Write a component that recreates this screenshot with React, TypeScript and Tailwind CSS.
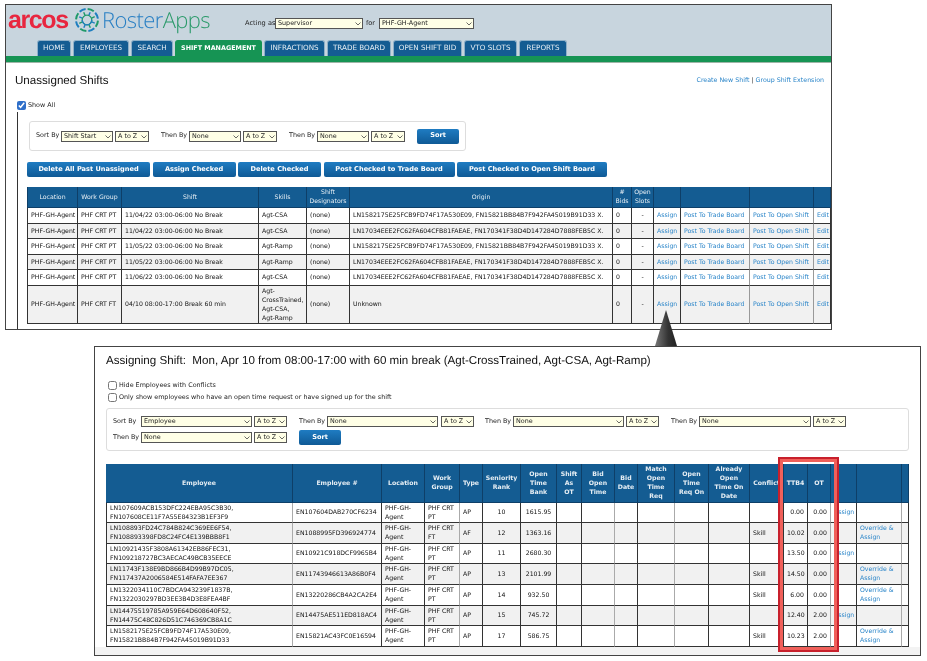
const verdana = "font-['DejaVu_Sans',sans-serif]";

const TABS = [
  { label: "HOME", w: "w-[34px]" },
  { label: "EMPLOYEES", w: "w-[56px]" },
  { label: "SEARCH", w: "w-[42px]" },
  { label: "SHIFT MANAGEMENT", w: "w-[87px]", active: true },
  { label: "INFRACTIONS", w: "w-[61px]" },
  { label: "TRADE BOARD", w: "w-[64px]" },
  { label: "OPEN SHIFT BID", w: "w-[69px]" },
  { label: "VTO SLOTS", w: "w-[53px]" },
  { label: "REPORTS", w: "w-[48px]" },
];

const ACTIONS = [
  { label: "Delete All Past Unassigned", w: "w-[123px]" },
  { label: "Assign Checked", w: "w-[83px]" },
  { label: "Delete Checked", w: "w-[83px]" },
  { label: "Post Checked to Trade Board", w: "w-[131px]" },
  { label: "Post Checked to Open Shift Board", w: "w-[150px]" },
];

const LN_A = "LN1582175E25FCB9FD74F17A530E09, FN15821BB84B7F942FA45019B91D33 X.";
const LN_B = "LN17034EEE2FC62FA604CFB81FAEAE, FN170341F38D4D147284D7888FEB5C X.";

const SHIFTS = [
  { group: "PHF CRT PT", shift: "11/04/22 03:00-06:00 No Break", skills: ["Agt-CSA"], origin: LN_A, h: "h-[16px]" },
  { group: "PHF CRT PT", shift: "11/04/22 03:00-06:00 No Break", skills: ["Agt-CSA"], origin: LN_B, h: "h-[15px]" },
  { group: "PHF CRT PT", shift: "11/05/22 03:00-06:00 No Break", skills: ["Agt-Ramp"], origin: LN_A, h: "h-[16px]" },
  { group: "PHF CRT PT", shift: "11/05/22 03:00-06:00 No Break", skills: ["Agt-Ramp"], origin: LN_B, h: "h-[15px]" },
  { group: "PHF CRT PT", shift: "11/06/22 03:00-06:00 No Break", skills: ["Agt-CSA"], origin: LN_B, h: "h-[16px]" },
  { group: "PHF CRT FT", shift: "04/10 08:00-17:00 Break 60 min", skills: ["Agt-", "CrossTrained,", "Agt-CSA,", "Agt-Ramp"], origin: "Unknown", h: "h-[38px]" },
];

const EMPLOYEES = [
  { a: "LN107609ACB153DFC224EBA95C3B30,", b: "FN107608CE11F7A55E84323B1EF3F9", no: "EN107604DAB270CF6234", group: "PT", type: "AP", rank: "10", bank: "1615.95", conflict: "", ttb: "0.00", ot: "0.00", h: "h-[20px]" },
  { a: "LN108893FD24C784B824C369EE6F54,", b: "FN108893398FD8C24FC4E139BBB8F1", no: "EN1088995FD396924774", group: "FT", type: "AF", rank: "12", bank: "1363.16", conflict: "Skill", ttb: "10.02", ot: "0.00", h: "h-[21px]" },
  { a: "LN10921435F3808A61342EB86FEC31,", b: "FN109218727BC3AECAC49BCB35EECE", no: "EN10921C918DCF9965B4", group: "PT", type: "AP", rank: "11", bank: "2680.30", conflict: "", ttb: "13.50", ot: "0.00", h: "h-[20px]" },
  { a: "LN11743F138E9BD866B4D99B97DC05,", b: "FN117437A2006584E514FAFA7EE367", no: "EN11743946613A86B0F4", group: "PT", type: "AP", rank: "13", bank: "2101.99", conflict: "Skill", ttb: "14.50", ot: "0.00", h: "h-[21px]" },
  { a: "LN1322034110C7BDCA943239F1837B,", b: "FN1322030297BD3EE3B4D3E8FEA4BF", no: "EN13220286CB4A2CA2E4", group: "PT", type: "AP", rank: "14", bank: "932.50", conflict: "Skill", ttb: "6.00", ot: "0.00", h: "h-[21px]" },
  { a: "LN14475519785A959E64D608640F52,", b: "FN14475C48C826D51C746369CB8A1C", no: "EN14475AE511ED818AC4", group: "PT", type: "AP", rank: "15", bank: "745.72", conflict: "", ttb: "12.40", ot: "2.00", h: "h-[20px]" },
  { a: "LN1582175E25FCB9FD74F17A530E09,", b: "FN15821BB84B7F942FA45019B91D33", no: "EN15821AC43FC0E16594", group: "PT", type: "AP", rank: "17", bank: "586.75", conflict: "Skill", ttb: "10.23", ot: "2.00", h: "h-[21px]" },
];

const SHIFT_COLS = ["w-[51px]", "w-[44px]", "w-[137px]", "w-[48px]", "w-[43px]", "w-[263px]", "w-[19px]", "w-[22px]", "w-[27px]", "w-[69px]", "w-[64px]", "w-[17px]"];

const EMP_HEAD = [
  { w: "w-[187px]", lines: ["Employee"] },
  { w: "w-[89px]", lines: ["Employee #"] },
  { w: "w-[43px]", lines: ["Location"] },
  { w: "w-[35px]", lines: ["Work", "Group"] },
  { w: "w-[23px]", lines: ["Type"] },
  { w: "w-[38px]", lines: ["Seniority", "Rank"] },
  { w: "w-[36px]", lines: ["Open", "Time", "Bank"] },
  { w: "w-[25px]", lines: ["Shift", "As", "OT"] },
  { w: "w-[33px]", lines: ["Bid", "Open", "Time"] },
  { w: "w-[23px]", lines: ["Bid", "Date"] },
  { w: "w-[37px]", lines: ["Match", "Open", "Time", "Req"] },
  { w: "w-[34px]", lines: ["Open", "Time", "Req On"] },
  { w: "w-[41px]", lines: ["Already", "Open", "Time On", "Date"] },
  { w: "w-[34px]", lines: ["Conflict"] },
  { w: "w-[24px]", lines: ["TTB4"] },
  { w: "w-[23px]", lines: ["OT"] },
  { w: "w-[26px]", lines: [] },
  { w: "w-[45px]", lines: [] },
  { w: "w-[7px]", lines: [] },
];

function Select({ value, w }: { value: string; w: string }) {
  return (
    <span className={`${w} relative block h-[11px] shrink-0`}>
      <select
        defaultValue={value}
        className={`block h-full w-full appearance-none rounded-none border border-[#555] bg-[#ffffe6] pl-[2px] text-[6.4px] leading-[9px] text-[#222] ${verdana}`}
      >
        <option>{value}</option>
      </select>
      <svg width="6" height="4" viewBox="0 0 6 4" className="pointer-events-none absolute top-[4px] right-[2px]">
        <path d="M0.5 0.5 L3 3 L5.5 0.5" fill="none" stroke="#444" strokeWidth="0.8" />
      </svg>
    </span>
  );
}

function Sort({ w }: { w: string }) {
  return (
    <button className={`${w} h-[15px] shrink-0 rounded-[2px] bg-gradient-to-b from-[#1f7cc2] to-[#0f5a96] text-[6.6px] font-bold text-white ${verdana}`}>
      Sort
    </button>
  );
}

function Logo() {
  const petals = [0, 45, 90, 135, 180, 225, 270, 315];
  return (
    <svg width="26" height="26" viewBox="0 0 26 26" className="shrink-0">
      {petals.map((a, i) => (
        <g key={a} transform={`rotate(${a + 22} 13 13)`}>
          <path d="M9.5 2.6 A11 11 0 0 1 16 2.4" fill="none" strokeWidth="2" stroke={i % 2 ? "#1f7fc0" : "#1f9a6a"} />
          <path d="M13 4.6 V8" fill="none" strokeWidth="1.4" stroke={i % 2 ? "#1f9a6a" : "#1f7fc0"} />
        </g>
      ))}
      <circle cx="13" cy="13" r="4.8" fill="none" stroke="#1f9a6a" strokeWidth="1.3" />
      <path d="M8.2 13 A4.8 4.8 0 0 0 17.8 13" fill="none" stroke="#1f7fc0" strokeWidth="1.3" />
    </svg>
  );
}

function Header() {
  return (
    <div className="flex h-[51px] flex-col bg-[#c8d5de]">
      <div className="flex h-[35px] items-start pl-[2px]">
        <div className="flex h-[30px] items-center">
          <span className="w-[66px] font-['Liberation_Sans',sans-serif] text-[25px] font-bold leading-none tracking-[-1.4px] text-[#e8263f]">arcos</span>
          <Logo />
          <span className="ml-[2px] w-[143px] font-['Open_Sans',sans-serif] text-[22px] font-light leading-none tracking-[-0.6px] text-[#2a80c4]">
            Roster<span className="text-[#2a9a6a]">Apps</span>
          </span>
        </div>
        <div className={`mt-[13px] flex items-center whitespace-nowrap text-[6.6px] text-[#222] ${verdana}`}>
          <span className="w-[30px]">Acting as</span>
          <Select value="Supervisor" w="w-[88px]" />
          <span className="w-[16px] pl-[3px]">for</span>
          <Select value="PHF-GH-Agent" w="w-[95px]" />
        </div>
      </div>
      <div className="mt-auto flex gap-[2px] pl-[31px]">
        {TABS.map((t) => (
          <div
            key={t.label}
            className={`${t.w} flex h-[16px] items-center justify-center whitespace-nowrap rounded-t-[3px] border border-b-0 ${verdana} ${
              t.active ? "border-[#169454] bg-[#169454] text-[6.4px] font-bold text-white" : "border-[#8fb0c8] bg-[#145c92] text-[7.2px] text-[#e6eef4]"
            }`}
          >
            {t.label}
          </div>
        ))}
      </div>
    </div>
  );
}

function ShiftsTable() {
  const td = "border-r border-b border-[#333] px-[3px]";
  const link = "text-[#2a85c9]";
  return (
    <table className={`w-[804px] table-fixed border-separate border-spacing-0 text-[6.2px] leading-[9px] text-[#111] ${verdana}`}>
      <colgroup>
        {SHIFT_COLS.map((w, i) => (
          <col key={i} className={w} />
        ))}
      </colgroup>
      <thead>
        <tr className="h-[21px] bg-[#145c92] text-center font-normal text-[#e6eef4]">
          {["Location", "Work Group", "Shift", "Skills", "Shift Designators", "Origin", "# Bids", "Open Slots", "", "", "", ""].map((h, i) => (
            <th key={i} className="overflow-hidden border-r border-b border-[#0e3f68] px-[1px] font-normal whitespace-normal first:border-l">
              {h}
            </th>
          ))}
        </tr>
      </thead>
      <tbody>
        {SHIFTS.map((s, i) => (
          <tr key={i} className={`${s.h} ${i % 2 ? "bg-[#f1f1f1]" : "bg-white"}`}>
            <td className={`${td} border-l whitespace-nowrap`}>PHF-GH-Agent</td>
            <td className={`${td} whitespace-nowrap`}>{s.group}</td>
            <td className={`${td} whitespace-nowrap`}>{s.shift}</td>
            <td className={td}>
              {s.skills.map((k) => (
                <div key={k}>{k}</div>
              ))}
            </td>
            <td className={td}>(none)</td>
            <td className={`${td} whitespace-nowrap`}>{s.origin}</td>
            <td className={td}>0</td>
            <td className={`${td} text-center`}>-</td>
            <td className={`${td} ${link} whitespace-nowrap`}>Assign</td>
            <td className={`${td} ${link} border-r-[#999] whitespace-nowrap`}>Post To Trade Board</td>
            <td className={`${td} ${link} border-r-[#999] whitespace-nowrap`}>Post To Open Shift</td>
            <td className={`${td} ${link} !pr-0 whitespace-nowrap`}>Edit</td>
          </tr>
        ))}
      </tbody>
    </table>
  );
}

function EmployeesTable() {
  const td = "border-r border-b border-[#333] px-[3px]";
  const gray = "border-r-[#aaa]";
  const link = "text-[#2a85c9]";
  return (
    <table className={`w-[803px] table-fixed border-separate border-spacing-0 text-[6.2px] leading-[9px] text-[#111] ${verdana}`}>
      <colgroup>
        {EMP_HEAD.map((c, i) => (
          <col key={i} className={c.w} />
        ))}
      </colgroup>
      <thead>
        <tr className="h-[39px] bg-[#145c92] text-center">
          {EMP_HEAD.map((c, i) => (
            <th key={i} className="overflow-hidden border-r border-b border-[#0e3f68] px-[1px] font-bold whitespace-nowrap text-[#e6eef4]">
              {c.lines.map((l) => (
                <div key={l}>{l}</div>
              ))}
            </th>
          ))}
        </tr>
      </thead>
      <tbody>
        {EMPLOYEES.map((e, i) => (
          <tr key={e.no} className={`${e.h} ${i % 2 ? "bg-[#f1f1f1]" : "bg-white"}`}>
            <td className={`${td} ${gray} border-l whitespace-nowrap`}>
              <div>{e.a}</div>
              <div>{e.b}</div>
            </td>
            <td className={`${td} whitespace-nowrap`}>{e.no}</td>
            <td className={td}>PHF-GH-Agent</td>
            <td className={`${td} ${gray}`}>PHF CRT {e.group}</td>
            <td className={td}>{e.type}</td>
            <td className={`${td} text-center`}>{e.rank}</td>
            <td className={`${td} text-center`}>{e.bank}</td>
            <td className={td} />
            <td className={`${td} ${gray}`} />
            <td className={td} />
            <td className={`${td} ${gray}`} />
            <td className={td} />
            <td className={td} />
            <td className={td}>{e.conflict}</td>
            <td className={`${td} text-right`}>{e.ttb}</td>
            <td className={`${td} text-right ${gray}`}>{e.ot}</td>
            <td className={`${td} ${link}`}>{e.conflict ? "" : "Assign"}</td>
            <td className={`${td} ${link} ${gray}`}>{e.conflict ? "Override & Assign" : ""}</td>
            <td className={td} />
          </tr>
        ))}
      </tbody>
    </table>
  );
}

function Check({ checked, label }: { checked?: boolean; label: string }) {
  return (
    <label className={`flex items-center gap-[2px] text-[6.4px] leading-[9px] text-[#222] ${verdana}`}>
      <input type="checkbox" defaultChecked={checked} className="m-0 h-[9px] w-[9px] accent-[#2f6fc9]" />
      {label}
    </label>
  );
}

function UnassignedShifts() {
  return (
    <div className="ml-[5px] h-[326px] w-[827px] overflow-hidden border border-[#444] bg-white">
      <Header />
      <div className="h-[7px] border-b border-[#9fb5a8] bg-[#169454]" />
      <div className="mt-[11px] flex h-[14px] items-center justify-between pr-[7px] pl-[9px]">
        <h1 className="font-['Liberation_Sans',sans-serif] text-[11.6px] text-[#111]">Unassigned Shifts</h1>
        <div className={`text-[6.3px] text-[#2a85c9] ${verdana}`}>
          Create New Shift <span className="text-[#333]">|</span> Group Shift Extension
        </div>
      </div>
      <div className="mt-[13px] pl-[11px]">
        <Check checked label="Show All" />
      </div>
      <div className="ml-[11px] mt-[2px] h-[220px] border-l border-[#333] pt-[9px] pl-[9px]">
        <div className={`ml-[2px] flex h-[30px] w-[437px] items-center rounded-[3px] border border-[#ddd] pl-[6px] text-[6.4px] text-[#222] ${verdana}`}>
          <span className="w-[25px]">Sort By</span>
          <Select value="Shift Start" w="w-[52px]" />
          <span className="w-[2px]" />
          <Select value="A to Z" w="w-[34px]" />
          <span className="w-[40px] pl-[12px]">Then By</span>
          <Select value="None" w="w-[52px]" />
          <span className="w-[2px]" />
          <Select value="A to Z" w="w-[34px]" />
          <span className="w-[40px] pl-[12px]">Then By</span>
          <Select value="None" w="w-[52px]" />
          <span className="w-[2px]" />
          <Select value="A to Z" w="w-[34px]" />
          <span className="w-[12px]" />
          <Sort w="w-[42px]" />
        </div>
        <div className="mt-[11px] flex gap-[2.5px]">
          {ACTIONS.map((a) => (
            <button
              key={a.label}
              className={`${a.w} h-[15px] shrink-0 rounded-[2px] bg-gradient-to-b from-[#1f7cc2] to-[#0f5a96] text-[6.6px] font-bold whitespace-nowrap text-white ${verdana}`}
            >
              {a.label}
            </button>
          ))}
        </div>
        <div className="mt-[10px]">
          <ShiftsTable />
        </div>
      </div>
    </div>
  );
}

function AssigningShift() {
  return (
    <div className="ml-[94px] mt-[16px] flex h-[310px] w-[827px] flex-col overflow-hidden border border-[#444] bg-white">
      <h2 className="mt-[7px] pl-[11px] font-['Liberation_Sans',sans-serif] text-[11.6px] leading-[14px] text-[#111]">
        Assigning Shift:&nbsp; Mon, Apr 10 from 08:00-17:00 with 60 min break (Agt-CrossTrained, Agt-CSA, Agt-Ramp)
      </h2>
      <div className="mt-[13px] flex flex-col gap-[3px] pl-[13px]">
        <Check label="Hide Employees with Conflicts" />
        <Check label="Only show employees who have an open time request or have signed up for the shift" />
      </div>
      <div className={`ml-[11px] mt-[6px] h-[44px] w-[803px] rounded-[3px] border border-[#ddd] pl-[6px] text-[6.4px] text-[#222] ${verdana}`}>
        <div className="mt-[7px] flex items-center">
          <span className="w-[28px]">Sort By</span>
          <Select value="Employee" w="w-[111px]" />
          <span className="w-[2px]" />
          <Select value="A to Z" w="w-[33px]" />
          <span className="w-[40px] pl-[12px]">Then By</span>
          <Select value="None" w="w-[111px]" />
          <span className="w-[3px]" />
          <Select value="A to Z" w="w-[33px]" />
          <span className="w-[39px] pl-[11px]">Then By</span>
          <Select value="None" w="w-[111px]" />
          <span className="w-[2px]" />
          <Select value="A to Z" w="w-[33px]" />
          <span className="w-[40px] pl-[12px]">Then By</span>
          <Select value="None" w="w-[112px]" />
          <span className="w-[2px]" />
          <Select value="A to Z" w="w-[33px]" />
        </div>
        <div className="mt-[3px] flex items-center">
          <span className="w-[28px]">Then By</span>
          <Select value="None" w="w-[111px]" />
          <span className="w-[2px]" />
          <Select value="A to Z" w="w-[33px]" />
          <span className="w-[12px]" />
          <Sort w="w-[42px]" />
        </div>
      </div>
      <div className="ml-[11px] mt-[13px]">
        <EmployeesTable />
      </div>
      <div className="mt-auto h-[8px] bg-[#f3f3f3]" />
    </div>
  );
}

export default function App() {
  return (
    <div className="relative h-[661px] w-[927px] overflow-hidden bg-white pt-[4px] blur-[0.3px] [text-rendering:geometricPrecision]">
      <UnassignedShifts />
      <AssigningShift />
      {/* callout arrow from the Assign link down to the panel */}
      <svg width="30" height="38" viewBox="0 0 30 38" className="absolute top-[309px] left-[652px]">
        <defs>
          <linearGradient id="arrow" x1="0" x2="1" y1="0" y2="0">
            <stop offset="0" stopColor="#777" />
            <stop offset="0.6" stopColor="#333" />
            <stop offset="1" stopColor="#222" />
          </linearGradient>
        </defs>
        <path d="M14 1 L3 37 H25 Z" fill="url(#arrow)" />
      </svg>
      {/* red highlight over the TTB4 and OT columns */}
      <div className="absolute top-[457px] left-[778px] h-[195px] w-[61px] border-[2px] border-[#c8202c]">
        <div className="h-full w-full border-[3px] border-[#f0605a]" />
      </div>
    </div>
  );
}
